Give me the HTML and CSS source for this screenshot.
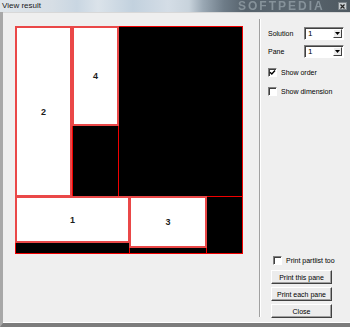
FILE: index.html
```html
<!DOCTYPE html>
<html>
<head>
<meta charset="utf-8">
<link rel="stylesheet" href="styles.css">
</head>
<body>
<div class="window">
  <div class="titlebar">
    <span class="title">View result</span>
    <span class="watermark">SOFTPEDIA</span>
    <span class="closebtn"><svg width="5" height="5" viewBox="0 0 5 5"><path d="M0.5 0.5L4.5 4.5M4.5 0.5L0.5 4.5" stroke="#222" stroke-width="1.2"/></svg></span>
  </div>
  <div class="frame">
    <div class="client">
      <div class="canvas-area">
        <div class="canvas">
          <div class="piece white" style="left:0;top:0;width:57px;height:171px">2</div>
          <div class="piece white" style="left:57px;top:0;width:47px;height:100px">4</div>
          <div class="piece black" style="left:57px;top:99px;width:47px;height:72px"></div>
          <div class="piece black" style="left:103px;top:0;width:125px;height:171px"></div>
          <div class="piece white" style="left:0;top:170px;width:115px;height:47px">1</div>
          <div class="piece black" style="left:0;top:216px;width:115px;height:12px"></div>
          <div class="piece white" style="left:114px;top:170px;width:78px;height:52px">3</div>
          <div class="piece black" style="left:114px;top:221px;width:78px;height:7px"></div>
          <div class="piece black" style="left:191px;top:170px;width:37px;height:58px"></div>
        </div>
      </div>
      <div class="separator"></div>
      <div class="panel">
        <div class="group">
          <div class="field">
            <span class="label">Solution</span>
            <span class="combo"><span class="combo-text">1</span><span class="combo-btn"><svg width="5" height="3" viewBox="0 0 5 3"><path d="M0 0H5L2.5 3Z" fill="#000"/></svg></span></span>
          </div>
          <div class="field">
            <span class="label">Pane</span>
            <span class="combo"><span class="combo-text">1</span><span class="combo-btn"><svg width="5" height="3" viewBox="0 0 5 3"><path d="M0 0H5L2.5 3Z" fill="#000"/></svg></span></span>
          </div>
          <div class="check first">
            <span class="box"><svg width="7" height="7" viewBox="0 0 7 7"><path d="M1 3.2L2.8 5L6 1.5" stroke="#000" stroke-width="1.4" fill="none"/></svg></span>
            <span>Show order</span>
          </div>
          <div class="check">
            <span class="box"></span>
            <span>Show dimension</span>
          </div>
        </div>
        <div class="group bottom">
          <div class="check print">
            <span class="box"></span>
            <span>Print partlist too</span>
          </div>
          <div class="btn">Print this pane</div>
          <div class="btn">Print each pane</div>
          <div class="btn">Close</div>
        </div>
      </div>
    </div>
  </div>
</div>
</body>
</html>
```

FILE: styles.css
```css
html, body {
  margin: 0;
  padding: 0;
}
body {
  width: 350px;
  height: 327px;
  overflow: hidden;
  font-family: "Liberation Sans", Arial, sans-serif;
  background: #efefef;
}
.window {
  width: 350px;
  height: 327px;
  display: flex;
  flex-direction: column;
}
.titlebar {
  height: 12px;
  flex: none;
  position: relative;
  display: flex;
  align-items: center;
  background: linear-gradient(90deg, #dfe5ea 0%, #d6dee5 15%, #c9d6e2 22%, #dbe3ea 28%, #c2d1de 38%, #d4dde6 48%, #c8d3dc 54%, #9aa8b4 58%, #6e7c88 64%, #56626c 70%, #5a666f 85%, #4e5860 100%);
  overflow: hidden;
}
.title {
  font-size: 8px;
  color: #1a1a1a;
  padding-left: 2px;
  line-height: 12px;
}
.watermark {
  position: absolute;
  left: 238px;
  top: 0;
  font-size: 12px;
  line-height: 12px;
  letter-spacing: 2px;
  color: #86929a;
  font-weight: bold;
  filter: blur(0.7px);
}
.closebtn {
  position: absolute;
  right: 3px;
  top: 2px;
  width: 9px;
  height: 8px;
  background: #c8cdd0;
  border: 1px solid #7a8288;
  box-sizing: border-box;
  display: flex;
  align-items: center;
  justify-content: center;
}
.frame {
  flex: 1;
  display: flex;
  border-left: 3px solid #a8a8a8;
  border-bottom: 4px solid #7c7c7c;
  box-shadow: inset 1px 0 0 #c8c8c8;
}
.client {
  flex: 1;
  display: flex;
  background: #efefef;
  border-top: 1px solid #d8d8d8;
  border-bottom: 1px solid #ffffff;
}
.canvas-area {
  padding: 13px 0 0 12px;
  width: 244px;
  flex: none;
}
.canvas {
  position: relative;
  width: 228px;
  height: 228px;
  background: #000;
  box-sizing: border-box;
  border: 1px solid #e00000;
}
.piece {
  position: absolute;
  box-sizing: border-box;
  display: flex;
  align-items: center;
  justify-content: center;
  font-size: 9px;
  font-weight: bold;
  color: #1c1c1c;
}
.canvas > .piece {
  margin: -1px 0 0 -1px;
}
.piece.white {
  background: #ffffff;
  border: 2px solid #ea4848;
  z-index: 1;
}
.piece.black {
  background: #000;
  border: 1px solid #f00000;
}
.separator {
  width: 1px;
  margin: 6px 0 5px 0;
  background: #a0a0a0;
  border-right: 1px solid #ffffff;
  flex: none;
}
.panel {
  flex: 1;
  display: flex;
  flex-direction: column;
  justify-content: space-between;
  padding: 14px 0 4px 6px;
  font-size: 7px;
  color: #000;
}
.field {
  display: flex;
  align-items: center;
  height: 13px;
  margin-bottom: 5px;
}
.label {
  width: 36px;
  padding-left: 1px;
}
.combo {
  width: 40px;
  height: 13px;
  box-sizing: border-box;
  background: #fff;
  border: 1px solid;
  border-color: #808080 #ffffff #ffffff #808080;
  box-shadow: inset 1px 1px 0 #404040;
  display: flex;
  align-items: center;
  justify-content: space-between;
}
.combo-text {
  padding-left: 3px;
  font-size: 8px;
}
.combo-btn {
  width: 9px;
  height: 9px;
  margin-right: 1px;
  background: #ececec;
  border: 1px solid;
  border-color: #ffffff #404040 #404040 #ffffff;
  box-sizing: border-box;
  display: flex;
  align-items: center;
  justify-content: center;
}
.check {
  display: flex;
  align-items: center;
  height: 10px;
  margin-bottom: 9px;
}
.check.first {
  margin-top: 9px;
}
.box {
  width: 9px;
  height: 9px;
  box-sizing: border-box;
  background: #fff;
  border: 1px solid;
  border-color: #808080 #ffffff #ffffff #808080;
  box-shadow: inset 1px 1px 0 #404040;
  margin-right: 4px;
  margin-left: 1px;
  display: flex;
  align-items: center;
  justify-content: center;
}
.group.bottom {
  display: flex;
  flex-direction: column;
  padding-left: 4px;
}
.check.print {
  margin-left: 1px;
  margin-bottom: 5px;
}
.btn {
  width: 61px;
  height: 14px;
  box-sizing: border-box;
  background: #ececec;
  border: 1px solid;
  border-color: #ffffff #404040 #404040 #ffffff;
  box-shadow: inset -1px -1px 0 #a0a0a0;
  display: flex;
  align-items: center;
  justify-content: center;
  margin-bottom: 3px;
}
.btn:last-child {
  margin-bottom: 0;
}
```
